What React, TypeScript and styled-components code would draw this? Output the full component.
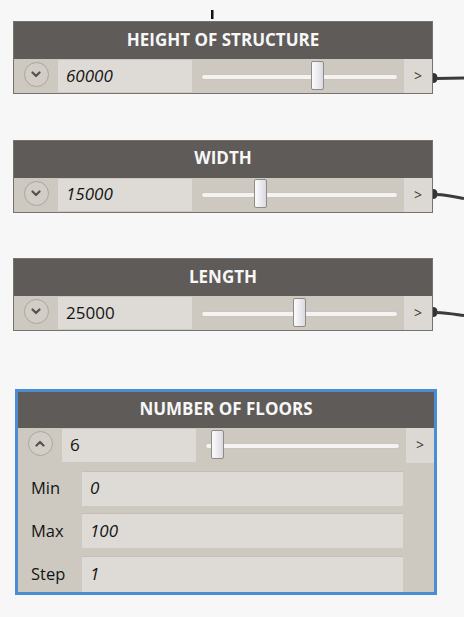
import React from "react";
import styled, { createGlobalStyle } from "styled-components";

const GlobalStyle = createGlobalStyle`
  html, body { margin: 0; padding: 0; background: #f7f7f7; }
  body { font-family: "Open Sans", "DejaVu Sans", sans-serif; }
  * { box-sizing: border-box; }
`;

const Canvas = styled.div`
  position: relative;
  width: 464px;
  height: 617px;
  overflow: hidden;
  padding: 21px 0 0 13px;
  display: flex;
  flex-direction: column;
  align-items: flex-start;
  gap: 45.5px;
`;

const Node = styled.div<{ $selected?: boolean }>`
  width: ${(p) => (p.$selected ? 422 : 420)}px;
  border: ${(p) => (p.$selected ? "3px solid #4a8dd4" : "1px solid #76726e")};
  margin: ${(p) => (p.$selected ? "12px 0 0 2px" : "0")};
  background: #cdc9c1;
  display: flex;
  flex-direction: column;
`;

const Header = styled.div<{ $selected?: boolean }>`
  height: ${(p) => (p.$selected ? 36 : 37)}px;
  background: #5f5b58;
  color: #f7f7f7;
  font-weight: 700;
  font-size: 17px;
  display: flex;
  align-items: center;
  justify-content: center;
  padding-bottom: 3px;
`;

const Row = styled.div<{ $selected?: boolean }>`
  height: ${(p) => (p.$selected ? 35 : 34)}px;
  display: grid;
  grid-template-columns: 44px 134px 1fr 28px;
  align-items: stretch;
`;

const ToggleCell = styled.div`
  display: flex;
  align-items: center;
  justify-content: center;
  padding-bottom: 3px;
`;

const Circle = styled.div`
  width: 25px;
  height: 25px;
  border-radius: 50%;
  border: 1.5px solid #aaa69f;
  background: #d2cec7;
  display: flex;
  align-items: center;
  justify-content: center;
`;

const ValueBox = styled.div<{ $italic?: boolean }>`
  margin: 1px 0;
  background: #dedbd6;
  display: flex;
  align-items: center;
  padding: 0 0 2px 8px;
  font-size: 17px;
  font-style: ${(p) => (p.$italic ? "italic" : "normal")};
  color: #141414;
`;

const SliderCell = styled.div`
  display: flex;
  align-items: center;
  padding: 0 7px 0 10px;
`;

const Track = styled.div`
  position: relative;
  flex: 1;
  height: 4px;
  border-radius: 2px;
  background: #f4f3f1;
  box-shadow: 0 0 0 1px #c9c5be;
  margin-top: 1px;
`;

const Thumb = styled.div`
  position: absolute;
  top: -14px;
  width: 13px;
  height: 29px;
  border: 1px solid #8d8b88;
  border-radius: 2px;
  background: linear-gradient(to right, #fbfbfc 0%, #ececf0 50%, #d9d9df 100%);
`;

const ArrowCell = styled.div`
  background: #dcd9d4;
  display: flex;
  align-items: center;
  justify-content: center;
  font-size: 14px;
  color: #3a3a3a;
  padding-bottom: 1px;
`;

const Extra = styled.div`
  display: flex;
  flex-direction: column;
  gap: 7.5px;
  padding-top: 8px;
`;

const ExtraRow = styled.div<{ $last?: boolean }>`
  height: ${(p) => (p.$last ? 36 : 35)}px;
  display: grid;
  grid-template-columns: 64px 321px 1fr;
  align-items: stretch;
`;

const Label = styled.div`
  display: flex;
  align-items: center;
  padding: 0 0 1px 13px;
  font-size: 16.5px;
  color: #141414;
`;

const Field = styled.div`
  background: #dedbd6;
  border-top: 1px solid #c3bfb8;
  display: flex;
  align-items: center;
  padding: 0 0 2px 8px;
  font-size: 17px;
  font-style: italic;
  color: #141414;
`;

const Wires = styled.svg`
  position: absolute;
  left: 0;
  top: 0;
  pointer-events: none;
`;

const Chevron = ({ up }: { up?: boolean }) => (
  <svg width="10" height="7" viewBox="0 0 10 7">
    <path
      d={up ? "M1.5 5.5 L5 2 L8.5 5.5" : "M1.5 1.5 L5 5 L8.5 1.5"}
      fill="none"
      stroke="#555250"
      strokeWidth="2.2"
      strokeLinecap="round"
      strokeLinejoin="round"
    />
  </svg>
);

type SliderNodeProps = {
  title: string;
  value: string;
  italic?: boolean;
  fraction: number;
  selected?: boolean;
  extras?: { label: string; value: string }[];
};

const SliderNode = ({ title, value, italic, fraction, selected, extras }: SliderNodeProps) => (
  <Node $selected={selected}>
    <Header $selected={selected}>{title}</Header>
    <Row $selected={selected}>
      <ToggleCell>
        <Circle>
          <Chevron up={!!extras} />
        </Circle>
      </ToggleCell>
      <ValueBox $italic={italic}>{value}</ValueBox>
      <SliderCell>
        <Track>
          <Thumb style={{ left: `calc(${fraction} * (100% - 13px))` }} />
        </Track>
      </SliderCell>
      <ArrowCell>&gt;</ArrowCell>
    </Row>
    {extras && (
      <Extra>
        {extras.map((e, i) => (
          <ExtraRow key={e.label} $last={i === extras.length - 1}>
            <Label>{e.label}</Label>
            <Field>{e.value}</Field>
          </ExtraRow>
        ))}
      </Extra>
    )}
  </Node>
);

export default function App() {
  return (
    <>
      <GlobalStyle />
      <Canvas>
        <SliderNode title="HEIGHT OF STRUCTURE" value="60000" italic fraction={0.6} />
        <SliderNode title="WIDTH" value="15000" italic fraction={0.286} />
        <SliderNode title="LENGTH" value="25000" fraction={0.5} />
        <SliderNode
          title="NUMBER OF FLOORS"
          value="6"
          fraction={0.027}
          selected
          extras={[
            { label: "Min", value: "0" },
            { label: "Max", value: "100" },
            { label: "Step", value: "1" },
          ]}
        />
        <Wires width="464" height="617" viewBox="0 0 464 617">
          <rect x="211" y="10" width="2.5" height="9" fill="#111" />
          <g fill="#333">
            <path d="M433 73 Q437.5 73 437.5 78 Q437.5 83 433 83 Z" />
            <path d="M433 189 Q437.5 189 437.5 194 Q437.5 199 433 199 Z" />
            <path d="M433 307 Q437.5 307 437.5 312 Q437.5 317 433 317 Z" />
          </g>
          <g fill="none" stroke="#3b3b3b" strokeWidth="3">
            <path d="M436 78.5 L464 78" />
            <path d="M436 194.5 C448 195 456 197 464 198.5" />
            <path d="M436 312.5 C448 313 456 314.5 464 315.5" />
          </g>
        </Wires>
      </Canvas>
    </>
  );
}
